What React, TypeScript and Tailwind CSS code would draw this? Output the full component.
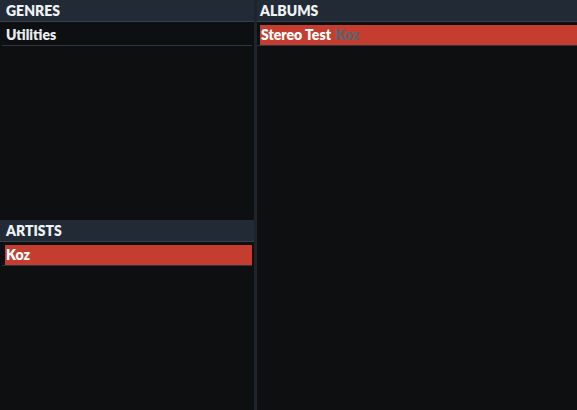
function Header({ title, pad }: { title: string; pad?: string }) {
  return (
    <div className={`h-[22px] bg-[#222b35] border-b border-[#35414d] ${pad ?? 'px-[6px]'} flex items-center text-[14px] font-extrabold text-[#eef2f5] leading-none`}>
      {title}
    </div>
  );
}

function Row({ label, sub, selected, full }: { label: string; sub?: string; selected?: boolean; full?: boolean }) {
  return (
    <div className={`mt-[3px] ${full ? '' : 'ml-[2px] mr-[2px]'} border-b border-[#2c3640]`}>
      <div
        className={`h-[20px] flex items-center text-[14px] font-extrabold leading-none ${
          selected ? 'ml-[3px] pl-[1px] bg-[#c53d2f] text-white' : 'pl-[4px] text-[#e8edf1]'
        }`}
      >
        <span>{label}</span>
        {sub && <span className="ml-[4px] text-[#5b6570]">{sub}</span>}
      </div>
    </div>
  );
}

export default function App() {
  return (
    <div
      className="w-[577px] h-[410px] flex bg-[#0d0f10] overflow-hidden"
      style={{ fontFamily: 'Lato, "Liberation Sans", sans-serif' }}
    >
      <div className="w-[254px] flex flex-col">
        <div className="h-[220px]">
          <Header title="GENRES" />
          <Row label="Utilities" />
        </div>
        <div className="flex-1">
          <Header title="ARTISTS" />
          <Row label="Koz" selected />
        </div>
      </div>
      <div className="w-[3px] bg-[#1d242c]" />
      <div className="flex-1">
        <Header title="ALBUMS" pad="px-[3px]" />
        <Row label="Stereo Test" sub="Koz" selected full />
      </div>
    </div>
  );
}
